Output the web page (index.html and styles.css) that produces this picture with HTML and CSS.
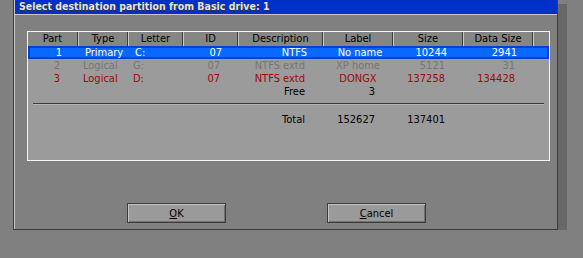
FILE: index.html
```html
<!DOCTYPE html>
<html lang="en">
<head>
    <meta charset="UTF-8">
    <title>Select destination partition</title>
    <link rel="stylesheet" href="styles.css">
</head>
<body>
    <!-- Dialog -->
    <div class="dialog">
        <div class="title-bar">Select destination partition from Basic drive: 1</div>

        <div class="panel">
            <div class="grid head">
                <div class="hcell">Part</div>
                <div class="hcell">Type</div>
                <div class="hcell">Letter</div>
                <div class="hcell">ID</div>
                <div class="hcell">Description</div>
                <div class="hcell">Label</div>
                <div class="hcell">Size</div>
                <div class="hcell">Data Size</div>
                <div class="hcell last"></div>
            </div>

            <div class="grid row selected">
                <div class="num">1</div>
                <div class="left">Primary</div>
                <div class="left">C:</div>
                <div class="num">07</div>
                <div class="num">NTFS</div>
                <div class="mid">No name</div>
                <div class="num">10244</div>
                <div class="num">2941</div>
            </div>
            <div class="grid row hidden-part">
                <div class="num">2</div>
                <div class="left">Logical</div>
                <div class="left">G:</div>
                <div class="num">07</div>
                <div class="num">NTFS extd</div>
                <div class="mid">XP home</div>
                <div class="num">5121</div>
                <div class="num">31</div>
            </div>
            <div class="grid row red">
                <div class="num">3</div>
                <div class="left">Logical</div>
                <div class="left">D:</div>
                <div class="num">07</div>
                <div class="num">NTFS extd</div>
                <div class="mid">DONGX</div>
                <div class="num">137258</div>
                <div class="num">134428</div>
            </div>
            <div class="grid row">
                <div></div>
                <div></div>
                <div></div>
                <div></div>
                <div class="num">Free</div>
                <div class="num">3</div>
                <div></div>
                <div></div>
            </div>

            <div class="separator"></div>

            <div class="grid row total">
                <div></div>
                <div></div>
                <div></div>
                <div></div>
                <div class="num">Total</div>
                <div class="num">152627</div>
                <div class="num">137401</div>
                <div></div>
            </div>
        </div>

        <div class="buttons">
            <button class="btn"><u>O</u>K</button>
            <button class="btn"><u>C</u>ancel</button>
        </div>
    </div>
</body>
</html>
```

FILE: styles.css
```css
/* Reset and Base Styles */
* {
    margin: 0;
    padding: 0;
    box-sizing: border-box;
    font-family: "DejaVu Sans Condensed", "Liberation Sans", sans-serif;
}

:root {
    --desk: #808080;
    --shadow: #686868;
    --dark: #3c3c3c;
    --light: #c8c8c8;
    --panel: #9b9b9b;
    --title: #0030c8;
    --select: #0868ff;
    --select-edge: #0040d8;
}

body {
    background-color: var(--desk);
    overflow: hidden;
    font-size: 11px;
}

/* Dialog */
.dialog {
    width: 545px;
    margin: -4px 0 0 13px;
    padding: 3px 0 6px 1px;
    background-color: var(--desk);
    border: 1px solid var(--dark);
    box-shadow: inset 1px 1px 0 var(--light), 9px 8px 0 var(--shadow);
}

.title-bar {
    height: 15px;
    padding-left: 4px;
    background-color: var(--title);
    border-bottom: 1px solid var(--light);
    color: #e4e4e4;
    font-weight: bold;
    font-size: 10.5px;
    line-height: 13px;
    text-shadow: 1px 1px 0 #303030;
}

/* Partition panel */
.panel {
    height: 130px;
    margin: 16px 7px 0 12px;
    background-color: var(--panel);
    border: 1px solid #f4f4f4;
}

.grid {
    display: grid;
    grid-template-columns: 50px 50px 55px 55px 85px 70px 70px 70px 1fr;
}

.head {
    height: 14px;
    background-color: #868686;
    color: #000;
    line-height: 13px;
}

.hcell {
    text-align: center;
    border-left: 1px solid var(--light);
    border-right: 1px solid var(--dark);
}

.hcell:first-child {
    border-left: none;
}

.hcell.last {
    border-right: none;
}

.row {
    height: 13px;
    line-height: 13px;
    color: #000;
}

.row .num {
    text-align: right;
    padding-right: 18px;
}

.row .left {
    padding-left: 5px;
}

.row .mid {
    text-align: center;
}

.selected {
    background-color: var(--select);
    border: 2px solid var(--select-edge);
    line-height: 9px;
    color: #fff;
}

.hidden-part {
    color: #767676;
}

.red {
    color: #a00808;
}

.separator {
    margin: 5px 5px 8px 5px;
    height: 2px;
    border-top: 1px solid var(--dark);
    border-bottom: 1px solid #b4b4b4;
}

.total {
    color: #000;
}

/* Buttons */
.buttons {
    display: flex;
    gap: 101px;
    margin-top: 42px;
    padding-left: 112px;
}

.btn {
    width: 99px;
    height: 20px;
    background-color: #9a9a9a;
    border: 1px solid var(--dark);
    box-shadow: inset 1px 1px 0 #c4c4c4, inset -1px -1px 0 #707070;
    font-size: 11px;
    color: #000;
}
```
